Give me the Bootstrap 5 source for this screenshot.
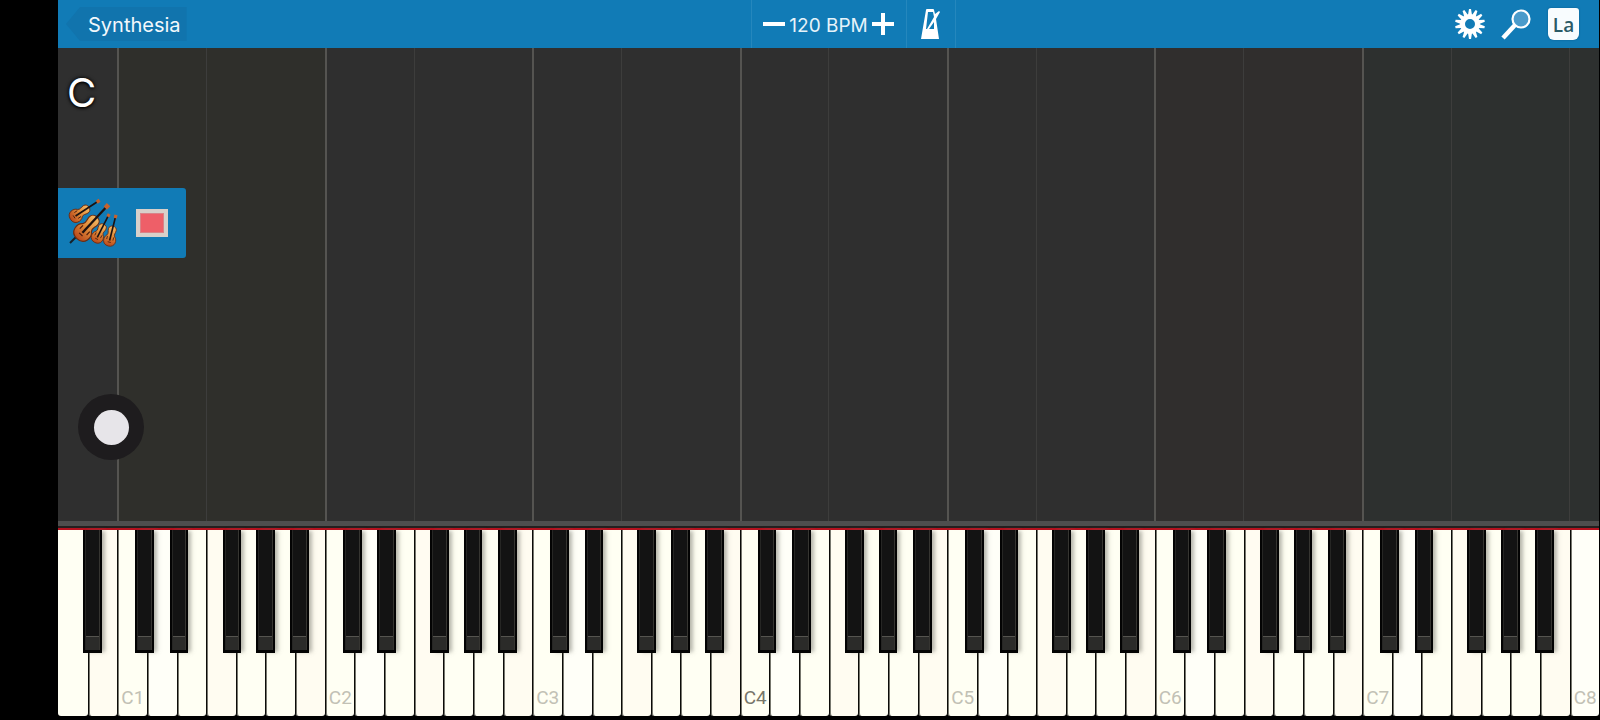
<!DOCTYPE html>
<html lang="en">
<head>
<meta charset="utf-8">
<meta name="viewport" content="width=device-width, initial-scale=1">
<title>Synthesia</title>
<link rel="stylesheet" href="https://cdn.jsdelivr.net/npm/bootstrap@5.3.0/dist/css/bootstrap.min.css">
<style>
  body { background: #000; font-family: Inter, "Liberation Sans", sans-serif; padding: 0 1px 4px 58px; }
  button { border: 0; padding: 0; background: none; }

  /* Toolbar */
  .toolbar { display: grid; grid-template-columns: 1fr auto 1fr; height: 48px; background: #117bb6; color: #fff; flex: none; }
  .icon-btn { display: flex; align-items: center; justify-content: center; }
  .back-btn { height: 34px; padding: 2px 6px 0 22px; margin-left: 8px; background: #1174ad; color: #f2f8fc; font-size: 20px;
    line-height: 32px; clip-path: polygon(14px 0, 100% 0, 100% 100%, 14px 100%, 0 50%); }
  .tempo { width: 156px; border: solid #2587bd; border-width: 0 1px; font-size: 19px; color: #e6f3fa; }
  .metronome { width: 49px; border-right: 1px solid #2587bd; }
  .la-btn { width: 31px; height: 32px; border-radius: 3px 3px 6px 6px; background: #f8fcfe; color: #2b5a66;
    font: 600 19px/35px "Open Sans", sans-serif; box-shadow: 0 0 2px #0b5d8d; }

  /* Falling-note area */
  .lane { border-left: 1px solid #3d3d3c; background: #2f2f2f; }
  .lane-octave { border-left: 2px solid #555451; }
  .lane-warm { background: #2f2f2b; }
  .lane-brown { background: #302e2d; }
  .lane-cool { background: #2d302f; }
  .lanes > :first-child { border-left: 0; }
  .overlay { position: absolute; inset: 0; }
  .note-name { padding: 21px 0 0 9px; height: 140px; font-size: 40px; line-height: 48px; color: #fff; text-shadow: 0 1px 3px #000, 0 0 4px #000; }
  .instrument { width: 128px; height: 70px; padding: 0 18px 0 9px; background: #117bb6; border-radius: 0 3px 3px 0; }
  .swatch { width: 32px; height: 28px; border: 4px solid #d8d0ca; background: #ee5f68; box-shadow: inset 0 0 0 1px #d98388; }
  .knob { width: 66px; height: 66px; margin: 136px 0 0 20px; border-radius: 50%; background: #1e1c1e; }
  .knob span { width: 35px; height: 35px; border-radius: 50%; background: #e7e5e9; }
  .ledge { height: 7px; flex: none; border-top: 5px solid #4e4e4e; background: #242020; }

  /* Keyboard */
  .keyboard { height: 188px; flex: none; border-top: 2px solid #b5121f; }
  .key { flex: 1 1 0; position: relative; min-width: 0; }
  .white-key { width: 100%; height: 100%; background: #fffff3; border-left: 1px solid #0b0b08; border-radius: 0 0 3px 3px;
    box-shadow: inset 1px 0 #77776e; padding: 0 0 6px 3px; display: flex; align-items: flex-end;
    font: 19px/24px Roboto, sans-serif; color: #c2c1b5; white-space: nowrap; }
  .white-key.pink { background: #fffcf1; }
  .white-key.pale { background: #fffff8; }
  .white-key.middle { color: #77766a; }
  .key:first-child .white-key { border-left: 0; box-shadow: none; }
  .black-key { position: absolute; z-index: 1; top: 0; width: 63%; height: 123px; border: solid #030303; border-width: 0 2px 3px;
    background: linear-gradient(#131313 0 106px, #55544f 106px 107px, #2b2b29 107px);
    box-shadow: 4px 0 4px -1px #77776b88, inset 1px 0 #262624, inset -1px 0 #363531; }
  .after-c { left: 61%; } .after-d { left: 77%; } .after-f { left: 55%; } .after-g { left: 69%; } .after-a { left: 84%; }
</style>
</head>
<body class="vh-100 d-flex flex-column overflow-hidden">

<header class="toolbar">
  <div class="d-flex align-items-center"><button class="back-btn">Synthesia</button></div>
  <div class="tempo d-flex align-items-center justify-content-center gap-1">
    <button class="icon-btn" aria-label="Slower"><svg width="22" height="22" viewBox="0 0 22 22"><path d="M0 9h22v4H0z" fill="#fff"/></svg></button>
    <span class="pt-1">120 BPM</span>
    <button class="icon-btn" aria-label="Faster"><svg width="22" height="22" viewBox="0 0 22 22"><path d="M9 0h4v9h9v4h-9v9H9v-9H0V9h9z" fill="#fff"/></svg></button>
  </div>
  <div class="d-flex align-items-stretch">
    <button class="metronome icon-btn" aria-label="Metronome"><svg width="22" height="32" viewBox="0 0 22 32"><path fill="#fff" fill-rule="evenodd" d="M6 2q0-1 1-1h6q1 0 1 1l1 4 4-3 1 1-4 7 3 20H1zM8 4L6 21h1L14 9l-1-5zm6 10l-5 7h5z"/></svg></button>
    <div class="d-flex align-items-center ms-auto pe-3 me-1">
      <button class="icon-btn me-3" aria-label="Settings"><svg width="30" height="32" viewBox="-15 -16 30 32"><circle r="7.5" fill="none" stroke="#fff" stroke-width="5"/><g id="teeth" fill="#fff"></g></svg></button>
      <button class="icon-btn me-3" aria-label="Search"><svg width="31" height="31" viewBox="0 0 31 31"><path d="M2 29L14 16" stroke="#fff" stroke-width="4.5"/><circle cx="20" cy="10" r="8.5" fill="#4a9bcb" stroke="#fff" stroke-width="2.2"/></svg></button>
      <button class="la-btn">La</button>
    </div>
  </div>
</header>

<main class="position-relative flex-grow-1 d-flex">
  <div class="lanes d-flex flex-fill" id="lanes"></div>
  <div class="overlay d-flex flex-column">
    <div class="note-name">C</div>
    <div class="instrument d-flex align-items-center justify-content-between">
      <button class="icon-btn" aria-label="String ensemble">
        <svg width="52" height="50" viewBox="0 0 52 50">
          <defs>
            <linearGradient id="wood" x1="0" x2="0" y1="0" y2="1"><stop offset="0" stop-color="#f3ba66"/><stop offset=".5" stop-color="#e08a38"/><stop offset="1" stop-color="#b8481c"/></linearGradient>
            <g id="violin">
              <path d="M-5-12C-5-18 5-18 5-12C5-8 3-7 5-4C9-1 9 9 0 9S-9-1-5-4C-3-7-5-8-5-12z" fill="url(#wood)" stroke="#6b2c12" stroke-width="1"/>
              <path d="M0-30V2" stroke="#1d1210" stroke-width="2"/>
              <path d="M-4-3v4M4-3v4M-2 4h4" stroke="#4c1c0d" stroke-width="1"/>
              <path d="M-2-30h4M-2-28h4" stroke="#c4622f" stroke-width="2"/>
            </g>
          </defs>
          <use href="#violin" transform="translate(10 17) rotate(57) scale(.87)"/>
          <path d="M3 45L10 38" stroke="#15202a" stroke-width="2"/>
          <use href="#violin" transform="translate(17 33) rotate(43) scale(1.16)"/>
          <use href="#violin" transform="translate(31 38) rotate(27) scale(.8)"/>
          <use href="#violin" transform="translate(43 41) rotate(14) scale(.8)"/>
        </svg>
      </button>
      <button class="swatch" aria-label="Track colour"></button>
    </div>
    <button class="knob icon-btn" aria-label="Touch control"><span></span></button>
  </div>
</main>
<div class="ledge"></div>
<div class="keyboard d-flex" id="keyboard"></div>

<script src="https://cdn.jsdelivr.net/npm/bootstrap@5.3.0/dist/js/bootstrap.bundle.min.js"></script>
<script>
  const whiteNotes = 'CDEFGAB';
  const keyboard = document.getElementById('keyboard');
  // 52 white keys from A0 to C8; each carries the sharp that follows it
  for (let i = 5; i < 57; i++) {
    const note = whiteNotes[i % 7], octave = Math.floor(i / 7);
    const key = document.createElement('div');
    key.className = 'key';
    const tint = i % 7 === 3 || i % 7 === 6 ? ' pink' : i % 7 === 1 || i === 56 ? ' pale' : '';
    const middle = note === 'C' && octave === 4 ? ' middle' : '';
    key.innerHTML = `<button class="white-key${tint}${middle}" aria-label="${note}${octave}">${note === 'C' ? note + octave : ''}</button>`;
    if ('CDFGA'.includes(note) && i < 56) {
      key.innerHTML += `<button class="black-key after-${note.toLowerCase()}" aria-label="${note} sharp ${octave}"></button>`;
    }
    keyboard.append(key);
  }
  // Lanes span from each C to F and from each F to the next C
  const lanes = document.getElementById('lanes');
  const addLane = (keys, cls) => {
    const lane = document.createElement('div');
    lane.className = 'lane ' + cls;
    lane.style.width = keys / 52 * 100 + '%';
    lanes.append(lane);
  };
  addLane(2, '');
  for (let octave = 1; octave < 8; octave++) {
    const tint = { 1: 'lane-warm', 6: 'lane-brown', 7: 'lane-cool' }[octave] || '';
    addLane(3, 'lane-octave ' + tint);
    addLane(4, tint);
  }
  addLane(1, 'lane-cool');
  // Gear teeth
  let teeth = '';
  for (let i = 0; i < 14; i++) teeth += `<path d="M-2-9L-1-15h2L2-9z" transform="rotate(${i * 360 / 14})"/>`;
  document.getElementById('teeth').innerHTML = teeth;
</script>
</body>
</html>
